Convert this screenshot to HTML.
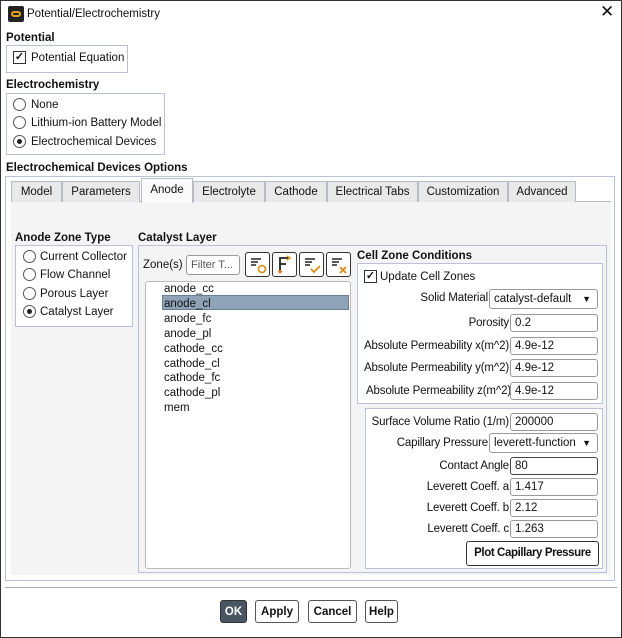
<!DOCTYPE html>
<html><head><meta charset="utf-8"><style>
*{box-sizing:border-box;margin:0;padding:0}
body{width:622px;height:638px;overflow:hidden;background:#fff;font-family:"Liberation Sans",sans-serif;font-size:11.5px;color:#111;position:relative}
.a{position:absolute;white-space:nowrap;line-height:17px}
.b{font-weight:bold}
.box{position:absolute;border:1px solid #b8c2d6}
.cb{position:absolute;width:13px;height:13px;border:1px solid #333;background:#fff;font-size:11px;line-height:11px;text-align:center;font-weight:bold}
.rd{position:absolute;width:13px;height:13px;border:1px solid #555;border-radius:50%;background:#fff}
.rd.on::after{content:"";position:absolute;left:3px;top:3px;width:5px;height:5px;border-radius:50%;background:#222}
.tab{position:absolute;top:181px;height:21px;border:1px solid #b8bcc4;border-bottom:none;background:#e9e9e9;text-align:center;line-height:20px}
.in{position:absolute;height:18px;border:1px solid #999;border-radius:3px;background:#fff;padding-left:4px;line-height:16px}
.lb{position:absolute;text-align:right;white-space:nowrap;font-size:11.5px;letter-spacing:-0.15px;line-height:17px}
.btn{position:absolute;top:600px;height:23px;border:1px solid #555;border-radius:3px;background:#fff;font-weight:bold;text-align:center;line-height:22px}
.ib{position:absolute;top:252px;width:25px;height:25px;border:1px solid #333;border-radius:3px;background:#fff}
</style></head><body>
<div class="a" style="left:0;top:0;width:622px;height:638px;border:1px solid #333"></div>
<div class="a" style="left:8px;top:6px;width:16px;height:16px;background:#222;border-radius:2px"><div style="margin:5px 3px;width:10px;height:6px;border:2px solid #e0a020;border-radius:3px"></div></div>
<div class="a" style="left:27px;top:6px">Potential/Electrochemistry</div>
<div class="a" style="left:600px;top:3px;font-size:17px">✕</div>

<div class="a b" style="left:6px;top:30px">Potential</div>
<div class="box" style="left:6px;top:45px;width:122px;height:28px"></div>
<div class="cb" style="left:13px;top:51px">✓</div>
<div class="a" style="left:31px;top:50px">Potential Equation</div>

<div class="a b" style="left:6px;top:77px">Electrochemistry</div>
<div class="box" style="left:6px;top:93px;width:159px;height:62px"></div>
<div class="rd" style="left:13px;top:98px"></div><div class="a" style="left:31px;top:97px">None</div>
<div class="rd" style="left:13px;top:116px"></div><div class="a" style="left:31px;top:115px">Lithium-ion Battery Model</div>
<div class="rd on" style="left:13px;top:135px"></div><div class="a" style="left:31px;top:134px">Electrochemical Devices</div>

<div class="a b" style="left:6px;top:160px">Electrochemical Devices Options</div>
<div class="box" style="left:5px;top:176px;width:610px;height:405px"></div>
<div class="a" style="left:11px;top:201px;width:600px;height:1px;background:#b8bcc4"></div>
<div class="a" style="left:11px;top:202px;width:600px;height:373px;background:#f4f4f4"></div>
<div class="tab" style="left:11px;width:51px">Model</div>
<div class="tab" style="left:62px;width:78px">Parameters</div>
<div class="tab" style="left:141px;top:178px;height:25px;width:52px;background:#fafafa;line-height:22px">Anode</div>
<div class="tab" style="left:193px;width:72px">Electrolyte</div>
<div class="tab" style="left:265px;width:62px">Cathode</div>
<div class="tab" style="left:327px;width:91px">Electrical Tabs</div>
<div class="tab" style="left:418px;width:90px">Customization</div>
<div class="tab" style="left:508px;width:68px">Advanced</div>

<div class="a b" style="left:15px;top:230px">Anode Zone Type</div>
<div class="box" style="left:15px;top:245px;width:118px;height:82px;background:#fff"></div>
<div class="rd" style="left:23px;top:250px"></div><div class="a" style="left:40px;top:249px">Current Collector</div>
<div class="rd" style="left:23px;top:268px"></div><div class="a" style="left:40px;top:267px">Flow Channel</div>
<div class="rd" style="left:23px;top:287px"></div><div class="a" style="left:40px;top:286px">Porous Layer</div>
<div class="rd on" style="left:23px;top:305px"></div><div class="a" style="left:40px;top:304px">Catalyst Layer</div>

<div class="a b" style="left:138px;top:230px">Catalyst Layer</div>
<div class="box" style="left:138px;top:245px;width:469px;height:328px"></div>
<div class="a" style="left:143px;top:257px">Zone(s)</div>
<div class="in" style="left:186px;top:255px;width:54px;height:20px;color:#555;line-height:18px;font-size:11px">Filter T...</div>
<div class="ib" style="left:245px"><svg width="23" height="23"><path d="M5 6h10M5 9h7M5 12h5" stroke="#222" stroke-width="1.5"/><circle cx="16" cy="16" r="3.5" fill="none" stroke="#d98a10" stroke-width="1.6"/></svg></div>
<div class="ib" style="left:272px"><svg width="23" height="23"><path d="M7 18V5h8M7 11h6" stroke="#222" stroke-width="1.8" fill="none"/><path d="M14 3l3 2-3 2M7 17l0 3M5 18l2 2 2-2" stroke="#d98a10" stroke-width="1.4" fill="none"/></svg></div>
<div class="ib" style="left:299px"><svg width="23" height="23"><path d="M5 6h10M5 9h7M5 12h5" stroke="#222" stroke-width="1.5"/><path d="M11 16l3 3 6-6" stroke="#d98a10" stroke-width="1.8" fill="none"/></svg></div>
<div class="ib" style="left:326px"><svg width="23" height="23"><path d="M5 6h10M5 9h7M5 12h5" stroke="#222" stroke-width="1.5"/><path d="M13 14l6 6M19 14l-6 6" stroke="#d98a10" stroke-width="1.8"/></svg></div>

<div class="a" style="left:145px;top:281px;width:206px;height:288px;background:#fff;border:1px solid #bbb;border-radius:3px"></div>
<div class="a" style="left:162px;top:295px;width:187px;height:15px;background:#8fa3b8;border:1px solid #6b7f94"></div>
<div class="a" style="left:164px;top:282px;line-height:14.9px">anode_cc<br>anode_cl<br>anode_fc<br>anode_pl<br>cathode_cc<br>cathode_cl<br>cathode_fc<br>cathode_pl<br>mem</div>

<div class="a b" style="left:357px;top:248px">Cell Zone Conditions</div>
<div class="box" style="left:357px;top:263px;width:246px;height:141px;background:#fff"></div>
<div class="cb" style="left:364px;top:270px">✓</div>
<div class="a" style="left:380px;top:269px">Update Cell Zones</div>
<div class="lb" style="right:134px;top:290px">Solid Material</div>
<div class="in" style="left:489px;top:289px;width:109px;height:20px;line-height:18px">catalyst-default<span style="position:absolute;right:6px;font-size:9px">▼</span></div>
<div class="lb" style="right:113px;top:315px">Porosity</div><div class="in" style="left:510px;top:314px;width:88px">0.2</div>
<div class="lb" style="right:113px;top:338px">Absolute Permeability x(m^2)</div><div class="in" style="left:510px;top:337px;width:88px">4.9e-12</div>
<div class="lb" style="right:113px;top:360px">Absolute Permeability y(m^2)</div><div class="in" style="left:510px;top:359px;width:88px">4.9e-12</div>
<div class="a" style="left:358px;top:381px;width:244px;height:20px;overflow:hidden"><div class="lb" style="right:91px;top:2px">Absolute Permeability z(m^2)</div><div class="in" style="left:152px;top:1px;width:88px">4.9e-12</div></div>

<div class="box" style="left:365px;top:408px;width:238px;height:161px;background:#fff"></div>
<div class="lb" style="right:113px;top:414px">Surface Volume Ratio (1/m)</div><div class="in" style="left:510px;top:413px;width:88px">200000</div>
<div class="lb" style="right:134px;top:435px">Capillary Pressure</div>
<div class="in" style="left:489px;top:433px;width:109px;height:20px;line-height:18px">leverett-function<span style="position:absolute;right:6px;font-size:9px">▼</span></div>
<div class="lb" style="right:113px;top:458px">Contact Angle</div><div class="in" style="left:510px;top:457px;width:88px;border-color:#444">80</div>
<div class="lb" style="right:113px;top:479px">Leverett Coeff. a</div><div class="in" style="left:510px;top:478px;width:88px">1.417</div>
<div class="lb" style="right:113px;top:500px">Leverett Coeff. b</div><div class="in" style="left:510px;top:499px;width:88px">2.12</div>
<div class="lb" style="right:113px;top:521px">Leverett Coeff. c</div><div class="in" style="left:510px;top:520px;width:88px">1.263</div>
<div class="a b" style="left:466px;top:541px;width:133px;height:25px;border:1px solid #333;border-radius:3px;text-align:center;line-height:23px;background:#fff;font-size:11.5px;letter-spacing:-0.4px">Plot Capillary Pressure</div>

<div class="a" style="left:5px;top:587px;width:612px;height:1px;background:#aaa"></div>
<div class="btn" style="left:220px;width:27px;background:#4a5563;color:#fff;border-color:#333">OK</div>
<div class="btn" style="left:255px;width:44px">Apply</div>
<div class="btn" style="left:308px;width:49px">Cancel</div>
<div class="btn" style="left:365px;width:33px">Help</div>
</body></html>
